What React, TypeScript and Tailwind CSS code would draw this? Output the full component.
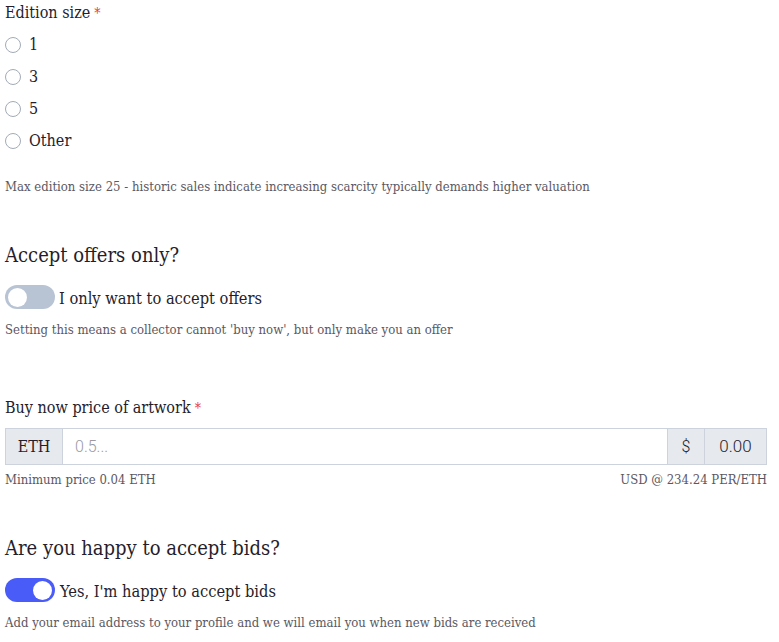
import React from "react"

const serif = "font-['DejaVu_Serif_Condensed','DejaVu_Serif',serif]"

function Radio({ label }: { label: string }) {
  return (
    <label className="flex h-8 items-center gap-2">
      <span className="h-4 w-4 rounded-full border border-[#a3abb8] bg-white" />
      <span className="text-base text-[#261d2b]">{label}</span>
    </label>
  )
}

function Toggle({ on }: { on: boolean }) {
  return (
    <span
      className={
        on
          ? "flex h-6 w-[50px] items-center justify-end rounded-full bg-[#4a5cf7] px-[3px]"
          : "flex h-6 w-[50px] items-center justify-start rounded-full bg-[#b8c4d4] px-[3px]"
      }
    >
      <span className="h-[19px] w-[19px] rounded-full bg-white" />
    </span>
  )
}

export default function App() {
  return (
    <div className={`min-h-screen bg-white pl-[5px] pr-[12px] text-[#261d2b] ${serif}`}>
      {/* Edition size */}
      <div className="flex h-[26px] items-center text-base">
        Edition size <span className="ml-1 text-sm text-[#e53e3e]">*</span>
      </div>
      <div className="mt-[3px] flex flex-col">
        <Radio label="1" />
        <Radio label="3" />
        <Radio label="5" />
        <Radio label="Other" />
      </div>
      <p className="mt-[21px] text-[13px] leading-[18px] text-[#5b5862]">
        Max edition size 25 - historic sales indicate increasing scarcity typically demands higher valuation
      </p>

      {/* Accept offers */}
      <h2 className="mt-[45px] text-xl leading-7">Accept offers only?</h2>
      <div className="mt-4 flex h-6 items-center gap-1">
        <Toggle on={false} />
        <span className="translate-y-[2px] text-[16.3px]">I only want to accept offers</span>
      </div>
      <p className="mt-3 text-[13px] leading-[18px] text-[#5b5862]">
        Setting this means a collector cannot 'buy now', but only make you an offer
      </p>

      {/* Buy now price */}
      <div className="mt-[57px] flex h-6 items-center text-base">
        Buy now price of artwork <span className="ml-1 text-sm text-[#e53e3e]">*</span>
      </div>
      <div className="mt-2 flex h-[37px] border border-[#cdd3dc]">
        <span className="flex w-[57px] items-center justify-center border-r border-[#cdd3dc] bg-[#e6e9ee] text-base">
          ETH
        </span>
        <input
          className="min-w-0 flex-1 px-3 font-['Roboto',sans-serif] text-base font-light text-[#261d2b] outline-none placeholder:text-[#9a9aa3]"
          placeholder="0.5..."
        />
        <span className="flex w-[37px] items-center justify-center border-l border-[#cdd3dc] bg-[#e6e9ee] font-['Roboto',sans-serif] text-base font-light">
          $
        </span>
        <span className="flex w-[62px] items-center justify-center border-l border-[#cdd3dc] bg-[#e6e9ee] font-['Roboto',sans-serif] text-[17px] font-light">
          0.00
        </span>
      </div>
      <div className="mt-[7px] flex h-4 items-center justify-between text-[13px] text-[#5b5862]">
        <span>Minimum price 0.04 ETH</span>
        <span>USD @ 234.24 PER/ETH</span>
      </div>

      {/* Bids */}
      <h2 className="mt-[46px] text-xl leading-7">Are you happy to accept bids?</h2>
      <div className="mt-4 flex h-6 items-center gap-[5px]">
        <Toggle on={true} />
        <span className="translate-y-[2px] text-[16.3px]">Yes, I'm happy to accept bids</span>
      </div>
      <p className="mt-3 text-[13px] leading-[18px] text-[#5b5862]">
        Add your email address to your profile and we will email you when new bids are received
      </p>
    </div>
  )
}
